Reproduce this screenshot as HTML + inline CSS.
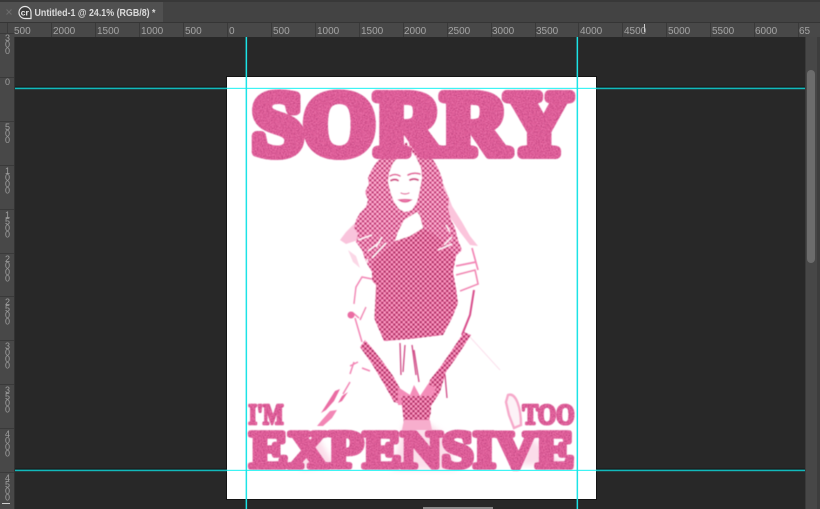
<!DOCTYPE html>
<html><head><meta charset="utf-8"><style>
html,body{margin:0;padding:0;width:820px;height:509px;overflow:hidden;background:#282828}
svg{display:block}
.r{font:10px "Liberation Sans",sans-serif;fill:#a4a4a4}
.l{font:9px "Liberation Sans",sans-serif;fill:#a0a0a0}
.t{font-family:"Liberation Serif",serif;font-weight:bold;fill:#e5619c;stroke:#e5619c;stroke-linejoin:round}
</style></head><body>
<svg width="820" height="509" viewBox="0 0 820 509" xmlns="http://www.w3.org/2000/svg">
<defs>
<filter id="n" x="-5%" y="-5%" width="110%" height="110%" color-interpolation-filters="sRGB">
<feTurbulence type="fractalNoise" baseFrequency="0.85" numOctaves="2" seed="4" result="tb"/>
<feColorMatrix in="tb" type="matrix" values="0 0 0 0 .68  0 0 0 0 .2  0 0 0 0 .44  2.4 0 0 0 -.95" result="d"/>
<feComposite in="d" in2="SourceAlpha" operator="in" result="dd"/>
<feColorMatrix in="tb" type="matrix" values="0 0 0 0 .97  0 0 0 0 .52  0 0 0 0 .73  0 2.4 0 0 -1.05" result="l"/>
<feComposite in="l" in2="SourceAlpha" operator="in" result="ll"/>
<feMerge result="m"><feMergeNode in="SourceGraphic"/><feMergeNode in="dd"/><feMergeNode in="ll"/></feMerge>
<feGaussianBlur in="m" stdDeviation=".4"/>
</filter>
<pattern id="h" width="3.4" height="3.4" patternUnits="userSpaceOnUse" patternTransform="rotate(45)">
<rect width="3.4" height="3.4" fill="#ec659f"/>
<circle cx="1.7" cy="1.7" r=".95" fill="#8f1f4c"/>
<circle cx="0" cy="0" r=".85" fill="#ffc3dc"/>
<circle cx="3.4" cy="0" r=".85" fill="#ffc3dc"/>
<circle cx="0" cy="3.4" r=".85" fill="#ffc3dc"/>
<circle cx="3.4" cy="3.4" r=".85" fill="#ffc3dc"/>
</pattern>
<pattern id="h2" width="3.4" height="3.4" patternUnits="userSpaceOnUse" patternTransform="rotate(45)">
<rect width="3.4" height="3.4" fill="#ee6ea8"/>
<circle cx="1.7" cy="1.7" r=".9" fill="#9a2354"/>
<circle cx="0" cy="0" r=".95" fill="#ffcde2"/>
<circle cx="3.4" cy="0" r=".95" fill="#ffcde2"/>
<circle cx="0" cy="3.4" r=".95" fill="#ffcde2"/>
<circle cx="3.4" cy="3.4" r=".95" fill="#ffcde2"/>
</pattern>
<filter id="b"><feGaussianBlur stdDeviation=".5"/></filter>
<filter id="b2"><feGaussianBlur stdDeviation="3"/></filter>
</defs>

<!-- chrome -->
<rect width="820" height="509" fill="#282828"/>
<rect width="820" height="23" fill="#434343"/>
<rect width="820" height="2" fill="#383838"/>
<rect x="0" y="2" width="163" height="21" fill="#505050"/>
<rect x="0" y="22" width="820" height="1" fill="#353535"/>
<rect x="0" y="23" width="820" height="14" fill="#484848"/>
<rect x="0" y="23" width="15" height="486" fill="#484848"/>
<rect x="14" y="37" width="1" height="472" fill="#333"/>
<rect x="805" y="37" width="15" height="472" fill="#474747"/>
<rect x="805" y="37" width="1" height="472" fill="#3a3a3a"/>
<rect x="817" y="37" width="3" height="472" fill="#3d3d3d"/>
<rect x="807" y="70" width="8" height="193" rx="4" fill="#6c6c6c"/>

<!-- tab -->
<path d="M6.5 9.5l5 5m0-5l-5 5" stroke="#6d6d6d" stroke-width="1" fill="none"/>
<path d="M25 6.5a6 6 0 1 0 0 12h6v-6a6 6 0 0 0-6-6z" fill="#3c3c3c" stroke="#e6e6e6" stroke-width="1.2"/>
<text x="20.8" y="15.5" font-family="Liberation Sans,sans-serif" font-size="8.5" font-weight="bold" fill="#eee">cr</text>
<text x="34.5" y="16" font-family="Liberation Sans,sans-serif" font-size="10.3" font-weight="bold" fill="#dcdcdc" textLength="121" lengthAdjust="spacingAndGlyphs">Untitled-1 @ 24.1% (RGB/8) *</text>

<!-- top ruler -->
<path d="M7.5 23v14M51.5 23v14M95.5 23v14M139.5 23v14M183.5 23v14M227.5 23v14M271.5 23v14M315.5 23v14M359.5 23v14M403.5 23v14M447.5 23v14M491.5 23v14M535.5 23v14M578.5 23v14M622.5 23v14M666.5 23v14M710.5 23v14M754.5 23v14M798.5 23v14" stroke="#3a3a3a"/>
<text class="r" x="14" y="34">500</text><text class="r" x="53" y="34">2000</text><text class="r" x="97" y="34">1500</text><text class="r" x="141" y="34">1000</text><text class="r" x="185" y="34">500</text><text class="r" x="229" y="34">0</text><text class="r" x="273" y="34">500</text><text class="r" x="317" y="34">1000</text><text class="r" x="361" y="34">1500</text><text class="r" x="404" y="34">2000</text><text class="r" x="448" y="34">2500</text><text class="r" x="492" y="34">3000</text><text class="r" x="536" y="34">3500</text><text class="r" x="580" y="34">4000</text><text class="r" x="624" y="34">4500</text><text class="r" x="668" y="34">5000</text><text class="r" x="712" y="34">5500</text><text class="r" x="755" y="34">6000</text><text class="r" x="799" y="34">65</text>
<rect x="644" y="24" width="1" height="8" fill="#cfcfcf"/>

<!-- left ruler -->
<path d="M0 33.5h14M0 77.5h14M0 121.5h14M0 165.5h14M0 209.5h14M0 253.5h14M0 296.5h14M0 340.5h14M0 384.5h14M0 428.5h14M0 472.5h14" stroke="#3a3a3a"/>
<g text-anchor="middle">
<text class="l" x="7.5" y="41">3</text><text class="l" x="7.5" y="47.500">0</text><text class="l" x="7.5" y="54">0</text>
<text class="l" x="7.5" y="85">0</text>
<text class="l" x="7.5" y="130">5</text><text class="l" x="7.5" y="136.500">0</text><text class="l" x="7.5" y="143">0</text>
<text class="l" x="7.5" y="174">1</text><text class="l" x="7.5" y="180.500">0</text><text class="l" x="7.5" y="187">0</text><text class="l" x="7.5" y="193.500">0</text>
<text class="l" x="7.5" y="218">1</text><text class="l" x="7.5" y="224.500">5</text><text class="l" x="7.5" y="231">0</text><text class="l" x="7.5" y="237.500">0</text>
<text class="l" x="7.5" y="262">2</text><text class="l" x="7.5" y="268.500">0</text><text class="l" x="7.5" y="275">0</text><text class="l" x="7.5" y="281.500">0</text>
<text class="l" x="7.5" y="305">2</text><text class="l" x="7.5" y="311.500">5</text><text class="l" x="7.5" y="318">0</text><text class="l" x="7.5" y="324.500">0</text>
<text class="l" x="7.5" y="349">3</text><text class="l" x="7.5" y="355.500">0</text><text class="l" x="7.5" y="362">0</text><text class="l" x="7.5" y="368.500">0</text>
<text class="l" x="7.5" y="393">3</text><text class="l" x="7.5" y="399.500">5</text><text class="l" x="7.5" y="406">0</text><text class="l" x="7.5" y="412.500">0</text>
<text class="l" x="7.5" y="437">4</text><text class="l" x="7.5" y="443.500">0</text><text class="l" x="7.5" y="450">0</text><text class="l" x="7.5" y="456.500">0</text>
<text class="l" x="7.5" y="481">4</text><text class="l" x="7.5" y="487.500">5</text><text class="l" x="7.5" y="494">0</text><text class="l" x="7.5" y="500.500">0</text>
</g>
<rect x="2" y="503" width="8" height="1" fill="#cfcfcf"/>

<!-- canvas -->
<rect x="226" y="76" width="371" height="424" fill="#141414"/>
<rect x="227" y="77" width="369" height="422" fill="#fff"/>
<rect x="423" y="507" width="70" height="2" fill="#8a8a8a"/>

<path d="M404 424L430 424 446 436 456 470 392 470Z" fill="#f8c5da" opacity=".55" filter="url(#b2)"/>
<path d="M315 432L300 470 335 466Z" fill="#fbdce9" filter="url(#b2)"/>
<path d="M530 438L520 465 565 464Z" fill="#fbdce9" filter="url(#b2)"/>

<!-- figure -->
<g filter="url(#b)">
<!-- hair wisps -->
<path d="M438 172L446 190 452 206 462 222 470 236 478 246 470 245 460 232 449 216 443 196Z" fill="#fbc5dc"/>
<path d="M356 222L346 232 340 240 346 244 358 240 362 230Z" fill="#f9c4dc"/>
<path d="M348 250L353 262 360 268 356 256Z" fill="#fbd7e6"/>
<!-- hair -->
<path d="M408 142L398 146 390 151 382 156 376 163 371 171 368 178 369 184 365 192 368 200 366 207 360 213 356 220 354 228 358 234 356 242 362 250 366 262 372 272 384 262 420 236 448 250 456 256 462 250 458 240 455 228 451 220 448 208 449 198 444 190 442 178 438 168 432 158 426 151 418 145Z" fill="url(#h2)"/>
<!-- torso -->
<path d="M422 228L396 242 382 252 372 262 372 278 374 300 374 318 384 341 410 339 443 335 452 318 458 303 456 288 453 272 456 256 446 244 434 234Z" fill="url(#h)"/>
<!-- hair white streaks -->
<path d="M358 240l14-5M368 251l12-9M376 247l6-10M372 258l14-15M444 245l8-8M438 250l14-6M363 268l5-9M446 225l4 7" stroke="#fff" stroke-width="1.5" fill="none" opacity=".9"/>
<path d="M408 142l1 8" stroke="#fff" stroke-width="1.6"/>
<!-- face + neck -->
<path d="M410 150L400 155 393 163 389 173 388 182 391 194 394 202 399 209 405 212 412 210 417 202 419 194 422 178 421 168 416 157Z" fill="#fff"/>
<path d="M417 212L404 220 398 232 395 241 410 236 423 228 420 216Z" fill="#fff"/>
<!-- face features -->
<g fill="none" stroke="#e25c97" stroke-linecap="round">
<path d="M390 176q5-3 10 0M408 175q6-3 12-1" stroke-width="1.6"/>
<path d="M391 180.500q4-2 7 0M410 180q4-2 8 0" stroke-width="1.9" stroke="#d24a86"/>
<path d="M401 193q4 2 8 0" stroke-width="1.2"/>
<path d="M399 200q6-1 12 0q-6 4-12 0z" stroke-width="1.3" fill="#ec86b3"/>
</g>
<!-- left sleeve -->
<path d="M372 281L356 290 353 305 352 312 359 317 368 315 374 322 376 285Z" fill="#fff"/>
<path d="M372 279L362 277 356 287 354 304M352 312L359 318M366 307L360 320M355 318L362 342" fill="none" stroke="#f286b5" stroke-width="1.5"/>
<circle cx="351" cy="315" r="3.5" fill="#ea6ca3"/>
<!-- right sleeve -->
<path d="M455 272L476 268 478 286 458 290Z" fill="#fff"/>
<path d="M456 275L475 270 478 284 460 291M472 248L478 270M456 266L476 262" fill="none" stroke="#f286b5" stroke-width="1.7"/>
<path d="M474 290L470 315 462 335" fill="none" stroke="#d84e8b" stroke-width="2"/>
<path d="M470 337L500 370" stroke="#fbe0ec" stroke-width="1" fill="none"/>
<!-- arms/legs V -->
<path d="M360 347L365 340 372 348 383 362 393 376 402 392 404 405 394 402 384 384 372 364Z" fill="url(#h)"/>
<path d="M471 335L464 332 452 350 441 366 430 380 424 396 431 406 440 392 446 372 456 358Z" fill="url(#h)"/>
<!-- skirt lines -->
<path d="M400 343L401 375M405 345L403 372M412 345L416 375M414 350L419 382M445 375L447 398" fill="none" stroke="#cf4a85" stroke-width="1.3"/>
<path d="M358 362L350 366M350 374L354 362M350 382L343 394M362 368L370 371" fill="none" stroke="#f286b5" stroke-width="1.5"/>
<!-- hands -->
<path d="M398 387L410 395 414 385 420 396 428 384 436 388 433 394 428 405 398 405Z" fill="#f48db9"/>
<path d="M401 396L431 396 431 412 428 424 404 424Z" fill="url(#h)"/>
<path d="M404 420L430 420 432 430 402 430Z" fill="#f7aecd"/>
<!-- lower left leg -->
<path d="M340 389L335 391 328 402 321 413 326 410 334 401Z" fill="#ea6ca3"/>
<path d="M348 392L342 396 338 403 342 401Z" fill="#ea6ca3"/>
<path d="M337 410L330 411 322 420 317 426 323 426 332 418Z" fill="#f286b5"/>
<!-- right oval -->
<path d="M508 395C516 392 521 408 521 425L514 428 509 415 506 402Z" fill="#fdf2f7" stroke="#f6a9ca" stroke-width="2.400"/>
</g>

<!-- headline text -->
<g filter="url(#n)">
<text class="t" x="252" y="154" font-size="90" stroke-width="10" textLength="320" lengthAdjust="spacingAndGlyphs">SORRY</text>
<text class="t" x="248.500" y="423.800" font-size="28" stroke-width="2.6" textLength="35" lengthAdjust="spacingAndGlyphs">I'M</text>
<text class="t" x="522.500" y="423.800" font-size="28" stroke-width="2.6" textLength="52" lengthAdjust="spacingAndGlyphs">TOO</text>
<text class="t" x="250" y="467.200" font-size="52" stroke-width="5.600" textLength="324" lengthAdjust="spacingAndGlyphs">EXPENSIVE</text>
</g>

<!-- guides -->
<rect x="15" y="86.700" width="212" height="1" fill="#111"/>
<rect x="596" y="86.700" width="209" height="1" fill="#111"/>
<rect x="15" y="468.700" width="212" height="1" fill="#111"/>
<rect x="596" y="468.700" width="209" height="1" fill="#111"/>
<rect x="15" y="87.600" width="212" height="1.600" fill="#12b9bb"/>
<rect x="596" y="87.600" width="209" height="1.600" fill="#12b9bb"/>
<rect x="15" y="469.600" width="212" height="1.600" fill="#12b9bb"/>
<rect x="596" y="469.600" width="209" height="1.600" fill="#12b9bb"/>
<rect x="227" y="87.800" width="369" height="1.200" fill="#3ef4f4"/>
<rect x="227" y="469.800" width="369" height="1.200" fill="#3ef4f4"/>
<rect x="245.600" y="37" width="1.500" height="472" fill="#1ce3e6"/>
<rect x="576.600" y="37" width="1.500" height="472" fill="#1ce3e6"/>
</svg>
</body></html>
